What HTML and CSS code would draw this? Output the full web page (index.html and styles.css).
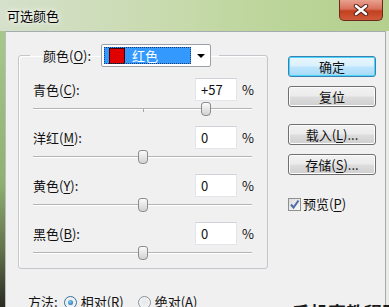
FILE: index.html
```html
<!DOCTYPE html>
<html lang="zh-CN">
<head>
  <meta charset="UTF-8">
  <title>可选颜色</title>
  <link rel="stylesheet" href="styles.css">
</head>
<body>
  <div class="window">

    <!-- Title bar -->
    <div class="titlebar">
      <span class="title">可选颜色</span>
      <div class="close">
        <svg width="16" height="12" viewBox="0 0 16 12">
          <path d="M3 2 L13 10 M13 2 L3 10" stroke="#4a1a12" stroke-width="4.4" stroke-linecap="round"/>
          <path d="M3 2 L13 10 M13 2 L3 10" stroke="#fff" stroke-width="2.6" stroke-linecap="round"/>
        </svg>
      </div>
    </div>

    <div class="frame">
      <div class="edge-left"></div>
      <div class="content">

        <div class="main">
          <fieldset class="group">
            <legend class="group-head">
              <span class="label">颜色(<u>O</u>):</span>
              <div class="select">
                <span class="select-value"><span class="swatch"></span>红色</span>
                <span class="select-arrow"></span>
              </div>
            </legend>

            <div class="row">
              <div class="row-head">
                <span class="label">青色(<u>C</u>):</span>
                <span class="num">+57</span>
                <span class="pct">%</span>
              </div>
              <div class="slider"><span class="thumb" style="left: 168px"></span></div>
            </div>

            <div class="row">
              <div class="row-head">
                <span class="label">洋红(<u>M</u>):</span>
                <span class="num">0</span>
                <span class="pct">%</span>
              </div>
              <div class="slider"><span class="thumb" style="left: 105px"></span></div>
            </div>

            <div class="row">
              <div class="row-head">
                <span class="label">黄色(<u>Y</u>):</span>
                <span class="num">0</span>
                <span class="pct">%</span>
              </div>
              <div class="slider"><span class="thumb" style="left: 105px"></span></div>
            </div>

            <div class="row">
              <div class="row-head">
                <span class="label">黑色(<u>B</u>):</span>
                <span class="num">0</span>
                <span class="pct">%</span>
              </div>
              <div class="slider"><span class="thumb" style="left: 105px"></span></div>
            </div>
          </fieldset>

          <div class="method">
            <span class="method-label">方法:</span>
            <span class="radio checked"></span>
            <span class="radio-text">相对(R)</span>
            <span class="radio"></span>
            <span class="radio-text">绝对(A)</span>
          </div>
        </div>

        <div class="side">
          <div class="button default">确定</div>
          <div class="button">复位</div>
          <div class="button spaced">载入(<u>L</u>)...</div>
          <div class="button">存储(<u>S</u>)...</div>
          <div class="check-row">
            <span class="checkbox">
              <svg width="11" height="11" viewBox="0 0 11 11">
                <path d="M2 5.5 L4.5 8.5 L9.5 1.5" fill="none" stroke="#4d6ea8" stroke-width="2"/>
              </svg>
            </span>
            <span>预览(<u>P</u>)</span>
          </div>
        </div>

      </div>
      <div class="edge-right"></div>
    </div>

    <div class="watermark">手机赛教程网</div>
  </div>
</body>
</html>
```

FILE: styles.css
```css
/* General */
html, body {
  margin: 0;
  padding: 0;
  width: 389px;
  height: 307px;
  overflow: hidden;
  font-family: "Noto Sans CJK SC", "DejaVu Sans", sans-serif;
  font-size: 13px;
  line-height: 16px;
  color: #111;
}

u {
  text-decoration: underline;
  text-underline-offset: 2px;
}

.window {
  position: relative;
  width: 389px;
  height: 307px;
  display: flex;
  flex-direction: column;
  background: linear-gradient(to right, #d6e0cb 0%, #c9dbb0 40%, #bcd59a 70%, #b4cf8e 100%);
}

/* Title bar */
.titlebar {
  height: 31px;
  display: flex;
  align-items: flex-start;
  flex-shrink: 0;
}

.title {
  margin: 8px 0 0 7px;
  font-size: 13px;
  color: #000;
  text-shadow: 0 0 6px #fff, 0 0 3px #fff;
}

.close {
  margin-left: auto;
  margin-right: 6px;
  width: 44px;
  height: 21px;
  box-sizing: border-box;
  border: 1px solid #6b2a1e;
  border-top: none;
  border-radius: 0 0 5px 5px;
  background: linear-gradient(to bottom, #e8a190 0%, #d8705a 45%, #c2401f 55%, #cf5a3a 100%);
  display: flex;
  align-items: center;
  justify-content: center;
}

/* Window frame */
.frame {
  flex: 1;
  display: flex;
  min-height: 0;
}

.edge-left {
  width: 5px;
  background: linear-gradient(to bottom, #a8c78c 0%, #8fb070 55%, #62704a 80%, #2a2a22 100%);
}

.edge-right {
  width: 3px;
  background: #e8ece4;
}

.content {
  flex: 1;
  display: flex;
  background: #f0f0f0;
  border-top: 1px solid #a4acb0;
  border-left: 1px solid #b8bec2;
  border-right: 1px solid #a4acb0;
  overflow: hidden;
}

/* Left column */
.main {
  margin-left: 12px;
  width: 250px;
}

.group {
  margin: 12px 0 0 0;
  padding: 11px 14px 8px 14px;
  width: 250px;
  box-sizing: border-box;
  border: 1px solid #c3c7cb;
  border-radius: 3px;
  box-shadow: inset 1px 1px 0 #fff;
  min-inline-size: 0;
}

.group-head {
  display: flex;
  align-items: center;
  margin-left: -3px;
  padding: 0 8px 0 13px;
}

.group-head .label {
  margin-right: 10px;
}

.select {
  width: 110px;
  height: 23px;
  box-sizing: border-box;
  border: 1px solid #9aa0a6;
  border-radius: 2px;
  background: #fff;
  display: flex;
  padding: 2px 0 2px 2px;
}

.select-value {
  flex: 1;
  display: flex;
  align-items: center;
  background: #3399ff;
  color: #fff;
  outline: 1px dotted #1a3a6a;
  outline-offset: -1px;
}

.swatch {
  width: 14px;
  height: 14px;
  margin: 0 7px 0 5px;
  background: #e00000;
  border: 1px solid #4a0000;
}

.select-arrow {
  width: 19px;
  display: flex;
  align-items: center;
  justify-content: center;
}

.select-arrow::before {
  content: "";
  border-left: 4px solid transparent;
  border-right: 4px solid transparent;
  border-top: 4px solid #000;
}

/* Slider rows */
.row {
  margin-bottom: 10px;
}

.row:last-child {
  margin-bottom: 0;
}

.row-head {
  display: flex;
  align-items: center;
  height: 23px;
}

.row-head .label {
  flex: 1;
}

.num {
  width: 42px;
  height: 23px;
  box-sizing: border-box;
  background: #fff;
  border: 1px solid #e2e6ea;
  border-top-color: #cfd3d8;
  padding: 3px 0 0 5px;
}

.pct {
  width: 11px;
  margin-left: 5px;
}

.slider {
  position: relative;
  height: 14px;
  margin-top: 1px;
}

.slider::before {
  content: "";
  position: absolute;
  left: 0;
  right: 1px;
  top: 6px;
  height: 1px;
  background: #b4b4b4;
  box-shadow: 0 1px 0 #fff;
}

.slider::after {
  content: "";
  position: absolute;
  left: 110px;
  top: 7px;
  width: 1px;
  height: 3px;
  background: #a8a8a8;
}

.thumb {
  position: absolute;
  top: 0;
  width: 10px;
  height: 14px;
  box-sizing: border-box;
  border: 1px solid #8c8c8c;
  border-radius: 3px 3px 4px 4px;
  background: linear-gradient(to bottom, #fbfbfb, #e6e6e6 50%, #d2d2d2);
  z-index: 1;
}

/* Method row */
.method {
  display: flex;
  align-items: center;
  margin: 25px 0 0 10px;
}

.method-label {
  margin-right: 6px;
}

.radio {
  width: 13px;
  height: 13px;
  box-sizing: border-box;
  border-radius: 50%;
  border: 1px solid #8e9398;
  background: radial-gradient(circle, #e4e6e8, #f8f8f8);
  margin-right: 4px;
  display: flex;
  align-items: center;
  justify-content: center;
}

.radio.checked {
  border-color: #3c6f9a;
}

.radio.checked::before {
  content: "";
  width: 5px;
  height: 5px;
  border-radius: 50%;
  background: radial-gradient(circle at 40% 35%, #7ad0f5, #1b5e9a);
}

.radio-text {
  margin-right: 14px;
}

/* Right column */
.side {
  margin-left: 20px;
  width: 88px;
  padding-top: 24px;
  display: flex;
  flex-direction: column;
}

.button {
  height: 21px;
  box-sizing: border-box;
  border: 1px solid #707070;
  border-radius: 3px;
  background: linear-gradient(to bottom, #f2f2f2 0%, #ebebeb 48%, #dddddd 52%, #cfcfcf 100%);
  box-shadow: inset 0 0 0 1px #fcfcfc;
  display: flex;
  align-items: center;
  justify-content: center;
  margin-bottom: 9px;
}

.button.default {
  border-color: #3c7fb1;
  box-shadow: inset 0 0 0 1px #48d7fb;
  background: linear-gradient(to bottom, #eaf6fd 0%, #d9f0fc 48%, #bee6fd 52%, #a7d9f5 100%);
}

.button.spaced {
  margin-top: 8px;
}

.check-row {
  display: flex;
  align-items: center;
  margin-top: 12px;
}

.checkbox {
  width: 13px;
  height: 13px;
  box-sizing: border-box;
  border: 1px solid #8e8f8f;
  background: linear-gradient(135deg, #dcdcdc, #fbfbfb);
  display: flex;
  align-items: center;
  justify-content: center;
  margin-right: 2px;
}

/* Watermark overlay */
.watermark {
  position: absolute;
  left: 292px;
  top: 302px;
  font-size: 18px;
  line-height: 20px;
  font-weight: bold;
  color: #1a1a1a;
  white-space: nowrap;
}
```
